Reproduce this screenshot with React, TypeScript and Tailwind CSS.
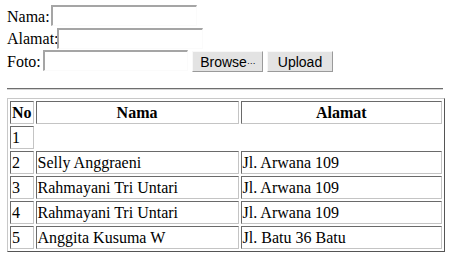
import React from "react";

const rows = [
  { no: "2", nama: "Selly Anggraeni", alamat: "Jl. Arwana 109" },
  { no: "3", nama: "Rahmayani Tri Untari", alamat: "Jl. Arwana 109" },
  { no: "4", nama: "Rahmayani Tri Untari", alamat: "Jl. Arwana 109" },
  { no: "5", nama: "Anggita Kusuma W", alamat: "Jl. Batu 36 Batu" },
];

const inputCls =
  "h-[21px] border-t-2 border-l-2 border-r border-b border-t-[#a5a5a5] border-l-[#a5a5a5] border-r-[#fbfbfb] border-b-[#fbfbfb] bg-white outline-none";

const btnCls =
  "h-[21px] flex items-center justify-center bg-[#e3e3e3] border border-t-[#f8f8f8] border-l-[#f8f8f8] border-r-[#9a9a9a] border-b-[#9a9a9a] text-[14px] text-black font-['Liberation_Sans',Arial,sans-serif] leading-none";

const cellCls =
  "border border-t-[#6a6a6a] border-l-[#6a6a6a] border-r-[#c4c4c4] border-b-[#c4c4c4] p-[1px] h-[23px] leading-[19px] align-middle";

export default function App() {
  return (
    <div className="w-[449px] h-[254px] bg-white text-black font-['Liberation_Serif','Times_New_Roman',serif] text-[16px] overflow-hidden">
      <div className="pt-[5px] pl-[7px]">
        <div className="flex items-start h-[22.5px]">
          <span className="w-[44px] whitespace-nowrap mt-[2.5px] leading-[18px]">Nama:</span>
          <input className={`${inputCls} w-[146px]`} />
        </div>
        <div className="flex items-start h-[22.5px]">
          <span className="w-[50px] whitespace-nowrap mt-[2.5px] leading-[18px]">Alamat:</span>
          <input className={`${inputCls} w-[146px]`} />
        </div>
        <div className="flex items-start h-[22.5px]">
          <span className="w-[36px] whitespace-nowrap mt-[2.5px] leading-[18px]">Foto:</span>
          <input className={`${inputCls} w-[145px]`} />
          <div className="flex gap-[4px] ml-[4px] mt-[1px]">
            <button className={`${btnCls} w-[71px]`}>
              Browse<span className="text-[9px] tracking-[-1px] self-end mb-[5px]">…</span>
            </button>
            <button className={`${btnCls} w-[66px]`}>Upload</button>
          </div>
        </div>
      </div>
      <div className="ml-[7px] mt-[15.5px] w-[436px] h-[2px] border-t border-t-[#6e6e6e] border-b border-b-[#d4d4d4]" />
      <table className="ml-[7px] mt-[8px] w-[438px] border-separate border-spacing-[2px] border border-t-[#c8c8c8] border-l-[#c8c8c8] border-r-[#555555] border-b-[#555555]">
        <tbody>
          <tr>
            <th className={`${cellCls} w-[22px] font-bold`}>No</th>
            <th className={`${cellCls} w-[203px] font-bold text-center`}>Nama</th>
            <th className={`${cellCls} font-bold text-center`}>Alamat</th>
          </tr>
          <tr>
            <td className={`${cellCls} text-left`}>1</td>
          </tr>
          {rows.map((r) => (
            <tr key={r.no}>
              <td className={`${cellCls} text-left`}>{r.no}</td>
              <td className={`${cellCls} text-left whitespace-nowrap`}>{r.nama}</td>
              <td className={`${cellCls} text-left whitespace-nowrap`}>{r.alamat}</td>
            </tr>
          ))}
        </tbody>
      </table>
    </div>
  );
}
